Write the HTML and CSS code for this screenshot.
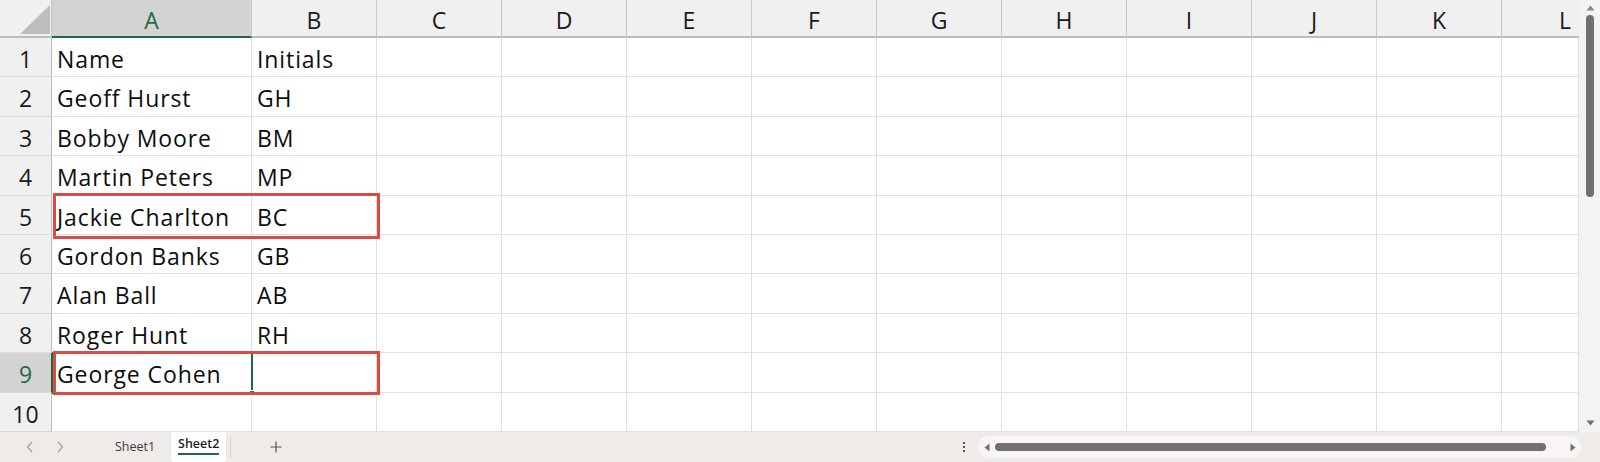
FILE: index.html
```html
<!DOCTYPE html>
<html lang="en">
<head>
<meta charset="utf-8">
<title>Sheet2</title>
<link rel="stylesheet" href="styles.css">
</head>
<body>
<div class="app">
  <div class="main">
    <div class="sheet">
      <div class="grid">
        <div class="corner"><svg class="corner-tri" width="52" height="36" viewBox="0 0 52 36"><polygon points="20,34 50,34 50,5" fill="#bdbdbd"/></svg></div>
        <div class="ch ch-sel">A</div><div class="ch">B</div><div class="ch">C</div><div class="ch">D</div><div class="ch">E</div><div class="ch">F</div><div class="ch">G</div><div class="ch">H</div><div class="ch">I</div><div class="ch">J</div><div class="ch">K</div><div class="ch ch-last">L</div>

        <div class="rh">1</div><div class="c">Name</div><div class="c">Initials</div><div class="c"></div><div class="c"></div><div class="c"></div><div class="c"></div><div class="c"></div><div class="c"></div><div class="c"></div><div class="c"></div><div class="c"></div><div class="c"></div>
        <div class="rh">2</div><div class="c">Geoff Hurst</div><div class="c">GH</div><div class="c"></div><div class="c"></div><div class="c"></div><div class="c"></div><div class="c"></div><div class="c"></div><div class="c"></div><div class="c"></div><div class="c"></div><div class="c"></div>
        <div class="rh">3</div><div class="c">Bobby Moore</div><div class="c">BM</div><div class="c"></div><div class="c"></div><div class="c"></div><div class="c"></div><div class="c"></div><div class="c"></div><div class="c"></div><div class="c"></div><div class="c"></div><div class="c"></div>
        <div class="rh">4</div><div class="c">Martin Peters</div><div class="c">MP</div><div class="c"></div><div class="c"></div><div class="c"></div><div class="c"></div><div class="c"></div><div class="c"></div><div class="c"></div><div class="c"></div><div class="c"></div><div class="c"></div>
        <div class="rh">5</div><div class="c">Jackie Charlton</div><div class="c">BC</div><div class="c"></div><div class="c"></div><div class="c"></div><div class="c"></div><div class="c"></div><div class="c"></div><div class="c"></div><div class="c"></div><div class="c"></div><div class="c"></div>
        <div class="rh">6</div><div class="c">Gordon Banks</div><div class="c">GB</div><div class="c"></div><div class="c"></div><div class="c"></div><div class="c"></div><div class="c"></div><div class="c"></div><div class="c"></div><div class="c"></div><div class="c"></div><div class="c"></div>
        <div class="rh">7</div><div class="c">Alan Ball</div><div class="c">AB</div><div class="c"></div><div class="c"></div><div class="c"></div><div class="c"></div><div class="c"></div><div class="c"></div><div class="c"></div><div class="c"></div><div class="c"></div><div class="c"></div>
        <div class="rh">8</div><div class="c">Roger Hunt</div><div class="c">RH</div><div class="c"></div><div class="c"></div><div class="c"></div><div class="c"></div><div class="c"></div><div class="c"></div><div class="c"></div><div class="c"></div><div class="c"></div><div class="c"></div>
        <div class="rh rh-sel">9</div><div class="c">George Cohen</div><div class="c"></div><div class="c"></div><div class="c"></div><div class="c"></div><div class="c"></div><div class="c"></div><div class="c"></div><div class="c"></div><div class="c"></div><div class="c"></div><div class="c"></div>
        <div class="rh">10</div><div class="c"></div><div class="c"></div><div class="c"></div><div class="c"></div><div class="c"></div><div class="c"></div><div class="c"></div><div class="c"></div><div class="c"></div><div class="c"></div><div class="c"></div><div class="c"></div>
      </div>
      <div class="selection"><span class="handle"></span></div>
      <div class="highlight hl-row5"></div>
      <div class="highlight hl-row9"></div>
    </div>
    <div class="vscroll">
      <svg class="arrow-up" width="9" height="6" viewBox="0 0 9 6"><polygon points="0.5,5.5 8.5,5.5 4.5,0.5" fill="#8a8a8a"/></svg>
      <div class="vthumb"></div>
      <div class="vspace"></div>
      <svg class="arrow-down" width="9" height="6" viewBox="0 0 9 6"><polygon points="0.5,0.5 8.5,0.5 4.5,5.5" fill="#6f6f6f"/></svg>
    </div>
  </div>
  <div class="tabbar">
    <svg class="nav nav-prev" width="8" height="12" viewBox="0 0 8 12"><polyline points="6,1 1.5,6 6,11" fill="none" stroke="#a3a3a3" stroke-width="1.3"/></svg>
    <svg class="nav nav-next" width="8" height="12" viewBox="0 0 8 12"><polyline points="2,1 6.5,6 2,11" fill="none" stroke="#a3a3a3" stroke-width="1.3"/></svg>
    <span class="tab">Sheet1</span>
    <span class="tab tab-active"><span class="tab-label">Sheet2</span></span>
    <span class="tab-sep"></span>
    <svg class="add" width="12" height="12" viewBox="0 0 12 12"><path d="M6 0.5V11.5M0.5 6H11.5" stroke="#555" stroke-width="1.2"/></svg>
    <span class="spacer"></span>
    <span class="kebab"><i></i><i></i><i></i></span>
    <div class="htrack">
      <svg class="harrow" width="6" height="9" viewBox="0 0 6 9"><polygon points="5.5,0.5 5.5,8.5 0.5,4.5" fill="#6f6f6f"/></svg>
      <div class="hthumb"></div>
      <svg class="harrow harrow-r" width="6" height="9" viewBox="0 0 6 9"><polygon points="0.5,0.5 0.5,8.5 5.5,4.5" fill="#6f6f6f"/></svg>
    </div>
  </div>
</div>
</body>
</html>
```

FILE: styles.css
```css
* { box-sizing: border-box; }

html, body {
  margin: 0;
  padding: 0;
  background: #ffffff;
}

.app {
  width: 1600px;
  height: 462px;
  overflow: hidden;
  display: flex;
  flex-direction: column;
  font-family: "Open Sans", "Noto Sans", sans-serif;
}

.main {
  display: flex;
  height: 432px;
}

.sheet {
  position: relative;
  width: 1579px;
  height: 432px;
}

.grid {
  display: grid;
  grid-template-columns: 52px 200px repeat(10, 125px) 77px;
  grid-template-rows: 38px 39px 40px 39px 40px 39px 39px 40px 39px 40px 39px;
  font-size: 23px;
  font-weight: 500;
  letter-spacing: 0.9px;
  color: #0d0d0d;
}

.corner {
  background: #f0f0f0;
  border-right: 1px solid #c6c6c6;
  border-bottom: 2px solid #bdbdbd;
  position: relative;
}

.corner-tri {
  display: block;
}

.ch {
  background: #f0f0f0;
  border-right: 1px solid #c8c8c8;
  border-bottom: 2px solid #bdbdbd;
  display: flex;
  justify-content: center;
  align-items: center;
  padding-top: 3px;
  color: #1a1a1a;
  letter-spacing: 0;
}

.ch-last {
  border-right: none;
  justify-content: flex-end;
  padding-right: 8px;
}

.ch-sel {
  background: #d3d3d3;
  color: #1e6b40;
  border-bottom-color: #1e6b40;
}

.rh {
  background: #f0f0f0;
  border-right: 1px solid #bdbdbd;
  border-bottom: 1px solid #dcdcdc;
  display: flex;
  justify-content: center;
  align-items: center;
  padding-top: 3px;
  letter-spacing: 0;
  color: #1a1a1a;
}

.rh-sel {
  background: #d3d3d3;
  color: #1e6b40;
  border-right: 1px solid #1e6b40;
}

.c {
  border-right: 1px solid #e1e1e1;
  border-bottom: 1px solid #e1e1e1;
  display: flex;
  align-items: center;
  padding: 3px 0 0 5px;
  white-space: nowrap;
  overflow: visible;
}

.selection {
  position: absolute;
  left: 52px;
  top: 352px;
  width: 201px;
  height: 42px;
  border: 2px solid #1e6b40;
}

.handle {
  position: absolute;
  right: -4px;
  bottom: -4px;
  width: 6px;
  height: 6px;
  background: #1e6b40;
  border: 1px solid #ffffff;
}

.highlight {
  position: absolute;
  left: 53px;
  width: 327px;
  border: 3px solid #dc4a43;
}

.hl-row5 {
  top: 193px;
  height: 46px;
}

.hl-row9 {
  top: 351px;
  height: 44px;
}

.vscroll {
  width: 21px;
  height: 432px;
  background: #f3f3f3;
  display: flex;
  flex-direction: column;
  align-items: center;
  padding: 5px 0 4px;
}

.arrow-up {
  display: block;
  margin-left: 1px;
}

.vthumb {
  width: 8px;
  height: 182px;
  margin-top: 4px;
  margin-left: 1px;
  border-radius: 4px;
  background: #707070;
}

.vspace {
  flex: 1;
}

.arrow-down {
  display: block;
  margin-left: 1px;
  margin-bottom: 2px;
}

.tabbar {
  height: 30px;
  background: #efebe8;
  display: flex;
  align-items: center;
  font-size: 12.5px;
  color: #3a3a3a;
}

.nav {
  display: block;
  flex: none;
}

.nav-prev {
  margin-left: 26px;
}

.nav-next {
  margin-left: 22px;
}

.tab {
  flex: none;
  line-height: 30px;
}

.tab:first-of-type {
  margin-left: 51px;
}

.tab-active {
  margin-left: 16px;
  width: 55px;
  height: 30px;
  background: #ffffff;
  border-radius: 0 0 4px 4px;
  display: flex;
  justify-content: center;
  align-items: flex-start;
  color: #1f1f1f;
  font-weight: 600;
  padding-top: 3px;
}

.tab-label {
  line-height: 17px;
  border-bottom: 2px solid #1e6b40;
  padding-bottom: 1px;
}

.tab-sep {
  flex: none;
  width: 1px;
  height: 20px;
  margin-left: 4px;
  background: #d2cfcc;
}

.add {
  display: block;
  flex: none;
  margin-left: 39px;
}

.spacer {
  flex: 1;
}

.kebab {
  flex: none;
  width: 4px;
  margin-right: 12px;
  display: flex;
  flex-direction: column;
  align-items: center;
  gap: 2px;
}

.kebab i {
  display: block;
  width: 2px;
  height: 2px;
  background: #555;
}

.htrack {
  flex: none;
  width: 603px;
  height: 22px;
  margin-right: 19px;
  border-radius: 11px;
  background: #f8f6f4;
  display: flex;
  align-items: center;
  padding: 0 5px 0 6px;
}

.harrow {
  display: block;
  flex: none;
}

.hthumb {
  width: 552px;
  height: 8px;
  margin-left: 5px;
  border-radius: 4px;
  background: #707070;
}

.harrow-r {
  margin-left: 24px;
}
```
